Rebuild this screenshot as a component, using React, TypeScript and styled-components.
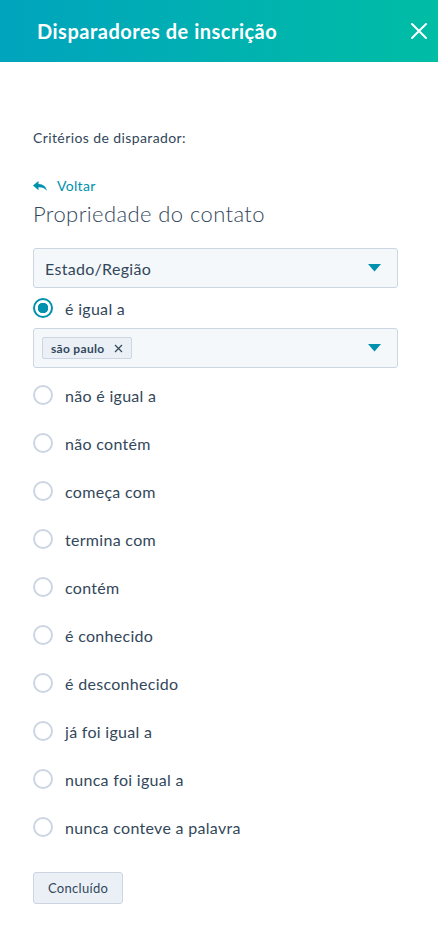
import styled, { createGlobalStyle } from "styled-components";

const GlobalStyle = createGlobalStyle`
  body {
    margin: 0;
    background: #fff;
    font-family: "Lato", "Noto Sans", sans-serif;
    color: #33475b;
  }
`;

const operators = [
  "é igual a",
  "não é igual a",
  "não contém",
  "começa com",
  "termina com",
  "contém",
  "é conhecido",
  "é desconhecido",
  "já foi igual a",
  "nunca foi igual a",
  "nunca conteve a palavra",
];

const Caret = () => (
  <svg width="13" height="8" viewBox="0 0 13 8">
    <path d="M0 0h13L6.5 7.5z" fill="#0091ae" />
  </svg>
);

export default function App() {
  return (
    <Panel>
      <GlobalStyle />
      <Header>
        <Title>Disparadores de inscrição</Title>
        <Close aria-label="Fechar">
          <svg width="16" height="16" viewBox="0 0 16 16">
            <path d="M1 1l14 14M15 1L1 15" stroke="#fff" strokeWidth="2" strokeLinecap="round" />
          </svg>
        </Close>
      </Header>
      <Body>
        <Label>Critérios de disparador:</Label>
        <Back>
          <svg width="14" height="11" viewBox="0 0 14 11">
            <path d="M5.5 0L0 4.6l5.5 4.6V6.2c3.8-.1 6.3.8 8.3 3.6C13.2 5.6 10.4 3.3 5.5 3z" fill="#0091ae" />
          </svg>
          Voltar
        </Back>
        <Heading>Propriedade do contato</Heading>
        <Select>
          <SelectText>Estado/Região</SelectText>
          <Caret />
        </Select>
        <RadioList>
          {operators.map((op, i) => (
            <div key={op}>
              <RadioRow $gap={i === 0 ? 10 : i === 1 ? 17 : 28}>
                <Radio $checked={i === 0} />
                <RadioLabel>{op}</RadioLabel>
              </RadioRow>
              {i === 0 && (
                <Select $tags>
                  <Tag>
                    são paulo
                    <svg width="9" height="9" viewBox="0 0 9 9">
                      <path d="M1 1l7 7M8 1L1 8" stroke="#33475b" strokeWidth="1.2" />
                    </svg>
                  </Tag>
                  <Caret />
                </Select>
              )}
            </div>
          ))}
        </RadioList>
        <Button>Concluído</Button>
      </Body>
    </Panel>
  );
}

const Panel = styled.div`
  width: 438px;
  min-height: 943px;
`;

const Header = styled.header`
  height: 62px;
  display: flex;
  align-items: center;
  justify-content: space-between;
  padding: 0 11px 0 37px;
  box-sizing: border-box;
  background: linear-gradient(to right, #00a4bd, #00bda5);
`;

const Title = styled.h1`
  margin: 0;
  font-size: 20px;
  font-weight: 700;
  letter-spacing: 0.5px;
  color: #fff;
`;

const Close = styled.button`
  border: 0;
  background: none;
  padding: 0;
  width: 16px;
  height: 16px;
  display: flex;
`;

const Body = styled.div`
  padding: 66px 40px 0 33px;
`;

const Label = styled.p`
  margin: 0;
  font-size: 14px;
  line-height: 20px;
  letter-spacing: 0.4px;
`;

const Back = styled.a`
  display: flex;
  align-items: center;
  gap: 10px;
  margin-top: 28px;
  font-size: 14px;
  line-height: 20px;
  letter-spacing: 0.3px;
  color: #0091ae;
`;

const Heading = styled.h2`
  margin: 3px 0 0;
  font-size: 22px;
  line-height: 30px;
  font-weight: 300;
  letter-spacing: 0.4px;
`;

const Select = styled.div<{ $tags?: boolean }>`
  height: 40px;
  box-sizing: border-box;
  display: flex;
  align-items: center;
  justify-content: space-between;
  margin-top: ${(p) => (p.$tags ? "10px" : "19px")};
  padding: ${(p) => (p.$tags ? "0 16px 0 8px" : "0 16px 0 11px")};
  background: #f5f8fa;
  border: 1px solid #cbd6e2;
  border-radius: 3px;
`;

const SelectText = styled.span`
  font-size: 16px;
  letter-spacing: 0.3px;
`;

const Tag = styled.span`
  display: flex;
  align-items: center;
  gap: 10px;
  height: 22px;
  box-sizing: border-box;
  padding: 0 8px;
  background: #eaf0f6;
  border: 1px solid #cbd6e2;
  border-radius: 2px;
  font-size: 12px;
  font-weight: 700;
  letter-spacing: 0.3px;
`;

const RadioList = styled.div`
  display: flex;
  flex-direction: column;
`;

const RadioRow = styled.label<{ $gap: number }>`
  display: flex;
  align-items: center;
  gap: 12px;
  height: 20px;
  margin-top: ${(p) => p.$gap}px;
`;

const Radio = styled.span<{ $checked?: boolean }>`
  width: 20px;
  height: 20px;
  box-sizing: border-box;
  border-radius: 50%;
  border: 2px solid ${(p) => (p.$checked ? "#0091ae" : "#cbd6e2")};
  background: ${(p) => (p.$checked ? "radial-gradient(circle, #0091ae 0 5px, #fff 5.5px)" : "#fff")};
`;

const RadioLabel = styled.span`
  font-size: 16px;
  letter-spacing: 0.3px;
`;

const Button = styled.button`
  margin-top: 35px;
  height: 32px;
  padding: 0 14px;
  background: #eaf0f6;
  border: 1px solid #cbd6e2;
  border-radius: 3px;
  font-family: inherit;
  font-size: 13px;
  letter-spacing: 0.3px;
  color: #33475b;
`;
